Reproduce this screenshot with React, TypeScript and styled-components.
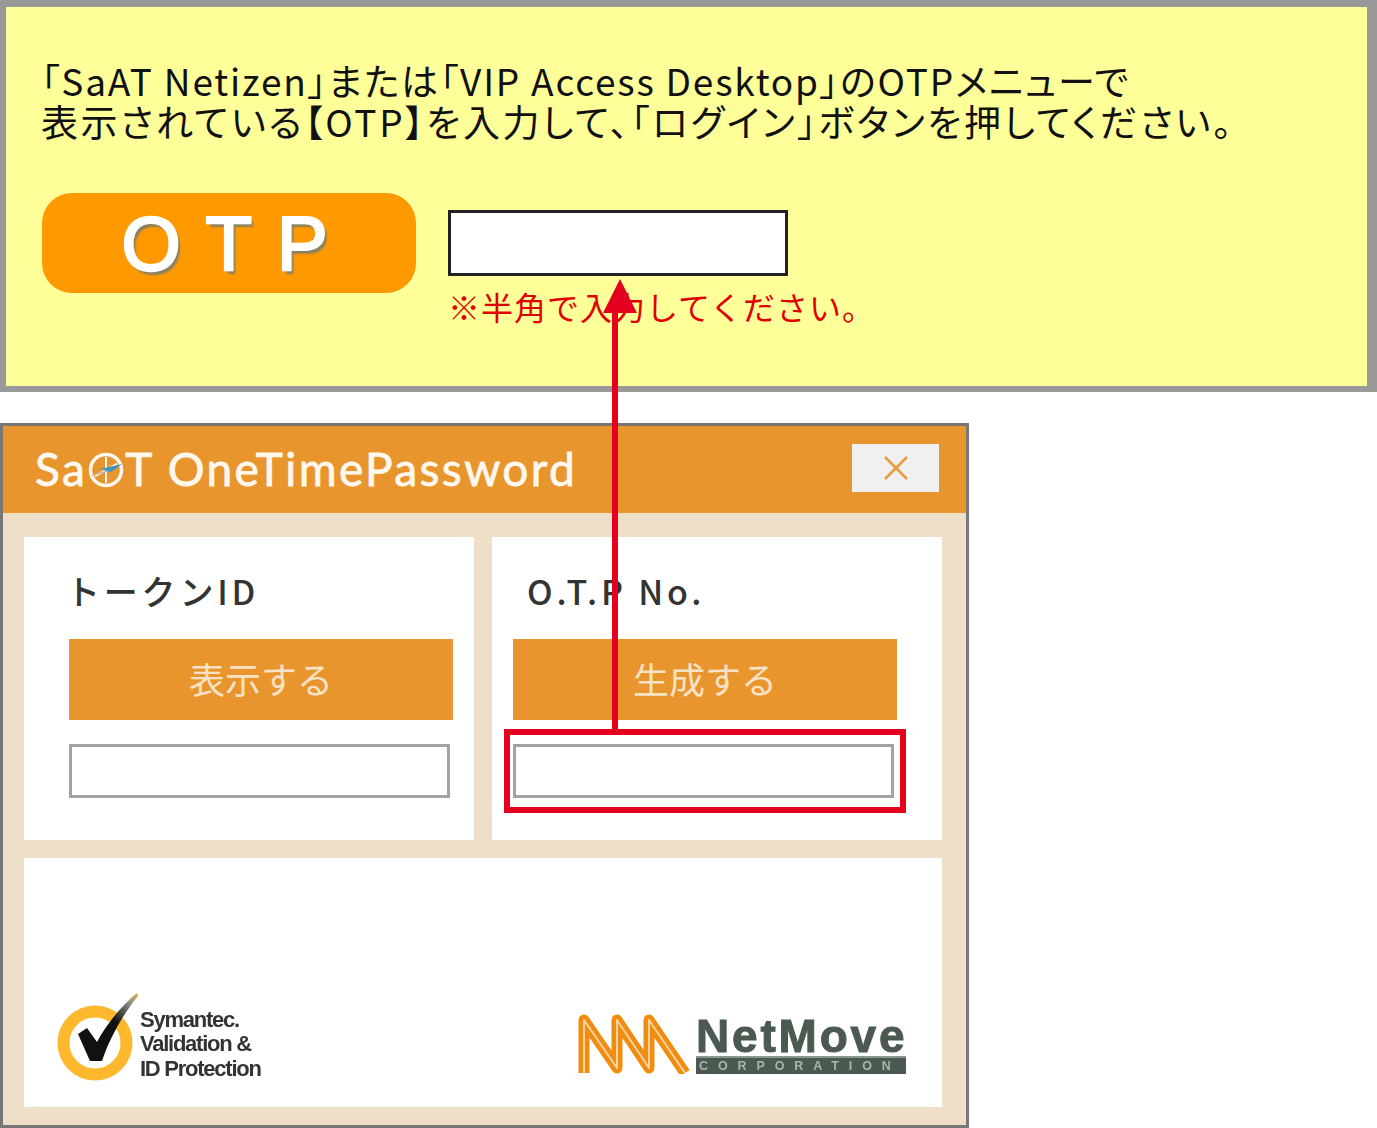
import React from 'react';
import styled, { createGlobalStyle } from 'styled-components';

const Global = createGlobalStyle`
  html, body { margin: 0; padding: 0; background: #fff; }
  body { font-family: "Liberation Sans", "Noto Sans CJK JP", sans-serif; }
`;

const Page = styled.div`
  position: relative;
  width: 1377px;
  height: 1128px;
  overflow: hidden;
  display: flex;
  flex-direction: column;
  gap: 31px;
`;

// upper panel
const Notice = styled.section`
  box-sizing: border-box;
  height: 392px;
  background: #ffff99;
  border: solid #999999;
  border-width: 7px 10px 6px 6px;
  padding: 53px 0 0 35px;
`;

const NoticeLine = styled.div<{ $tracking: number }>`
  font-family: "Noto Sans CJK JP", sans-serif;
  font-size: 37px;
  line-height: 41px;
  color: #111;
  white-space: nowrap;
  font-feature-settings: "palt";
  letter-spacing: ${p => p.$tracking}px;
`;

const NoticeRow = styled.div`
  display: flex;
  gap: 32px;
  margin-left: 1px;
  margin-top: 51px;
`;

const OtpBadge = styled.div`
  box-sizing: border-box;
  width: 374px;
  height: 100px;
  padding-left: 16px;
  border-radius: 30px;
  background: #ff9900;
  color: #fff;
  display: flex;
  align-items: center;
  justify-content: center;
  font-family: "Liberation Sans", sans-serif;
  font-size: 76px;
  font-weight: 400;
  letter-spacing: 25px;
  -webkit-text-stroke: 2.5px #fff;
  text-shadow: 3px 4px 2px #8a8060;
`;

const OtpColumn = styled.div`
  display: flex;
  flex-direction: column;
  padding-top: 17px;
`;

const OtpInput = styled.div`
  box-sizing: border-box;
  width: 340px;
  height: 66px;
  background: #fff;
  border: 3px solid #222;
`;

const HalfWidthNote = styled.div`
  margin-top: 10px;
  font-family: "Noto Sans CJK JP", sans-serif;
  font-size: 32px;
  line-height: 40px;
  letter-spacing: 1px;
  color: #e00000;
  white-space: nowrap;
`;

// lower window
const Window = styled.section`
  box-sizing: border-box;
  width: 969px;
  height: 705px;
  border: 3px solid #777777;
  background: #f0dfc8;
  display: flex;
  flex-direction: column;
`;

const TitleBar = styled.header`
  height: 87px;
  background: #e9952e;
  display: flex;
  align-items: center;
  justify-content: space-between;
  padding: 0 27px 0 32px;
  flex-shrink: 0;
`;

const TitleText = styled.div`
  display: flex;
  align-items: center;
  font-family: "Lato", sans-serif;
  font-size: 46px;
  font-weight: 400;
  letter-spacing: 2.4px;
  -webkit-text-stroke: 0.8px #fff8ee;
  color: #fff8ee;
  white-space: pre;
  margin-top: -2px;
`;

const CloseButton = styled.div`
  width: 87px;
  height: 48px;
  margin-top: -3px;
  background: #f0f0f0;
  display: flex;
  align-items: center;
  justify-content: center;
`;

const WindowBody = styled.div`
  flex: 1;
  display: grid;
  grid-template-columns: 450px 450px;
  grid-template-rows: 303px 249px;
  gap: 18px;
  padding: 24px 24px 18px 21px;
`;

const Card = styled.div<{ $inset: number }>`
  background: #fff;
  display: flex;
  flex-direction: column;
  padding-left: ${p => p.$inset}px;
`;

const CardTitle = styled.div<{ $shift: number }>`
  margin: 34px 0 0 ${p => p.$shift}px;
  height: 68px;
  font-family: "Noto Sans CJK JP", sans-serif;
  font-size: 34px;
  line-height: 40px;
  font-weight: 500;
  letter-spacing: 3.8px;
  color: #333;
  white-space: nowrap;
`;

const OrangeButton = styled.div`
  box-sizing: border-box;
  width: 384px;
  height: 81px;
  padding-bottom: 4px;
  background: #e9952e;
  color: #f8e2c6;
  display: flex;
  align-items: center;
  justify-content: center;
  font-family: "Noto Sans CJK JP", sans-serif;
  font-size: 36px;
`;

const FieldBox = styled.div`
  box-sizing: border-box;
  width: 381px;
  height: 54px;
  margin-top: 24px;
  background: #fff;
  border: 3px solid #a3a3a3;
`;

const FooterCard = styled.div`
  grid-column: 1 / 3;
  background: #fff;
  display: flex;
  align-items: flex-end;
  justify-content: space-between;
  padding: 0 36px 24px 32px;
`;

const SymantecLogo = styled.div`
  display: flex;
  align-items: flex-end;
`;

const SymantecText = styled.div`
  margin: 0 0 2px -14px;
  font-family: "Liberation Sans", sans-serif;
  font-size: 22px;
  line-height: 24.5px;
  font-weight: 700;
  letter-spacing: -1.25px;
  color: #333;
  white-space: nowrap;
  filter: blur(0.6px);
`;

const NetMoveLogo = styled.div`
  display: flex;
  align-items: flex-end;
  gap: 6px;
  margin-bottom: 9px;
`;

const NetMoveWords = styled.div`
  width: 210px;
  display: flex;
  flex-direction: column;
`;

const NetMoveName = styled.div`
  font-family: "Liberation Sans", sans-serif;
  font-size: 46px;
  line-height: 38px;
  height: 39px;
  font-weight: 700;
  letter-spacing: 2.8px;
  -webkit-text-stroke: 1px #4b5a50;
  color: #4b5a50;
  white-space: nowrap;
  filter: blur(0.6px);
`;

const CorporationBar = styled.div`
  height: 18px;
  background: #4b5a50;
  border-top: 2px solid #8d9790;
  box-sizing: border-box;
  padding-left: 3px;
  color: #aab3ad;
  font-family: "Liberation Sans", sans-serif;
  font-size: 12.5px;
  line-height: 16px;
  font-weight: 700;
  letter-spacing: 9.9px;
  white-space: nowrap;
  filter: blur(0.4px);
`;

// red annotation over both panels
const CalloutBox = styled.div`
  position: absolute;
  box-sizing: border-box;
  left: 504px;
  top: 729px;
  width: 402px;
  height: 84px;
  border: 6px solid #e60020;
`;

const CalloutLine = styled.div`
  position: absolute;
  left: 612px;
  top: 300px;
  width: 6px;
  height: 430px;
  background: #e60020;
`;

const CalloutHead = styled.div`
  position: absolute;
  left: 603px;
  top: 279px;
  width: 0;
  height: 0;
  border-left: 17px solid transparent;
  border-right: 17px solid transparent;
  border-bottom: 34px solid #e60020;
`;

const LogoMark = () => (
  <svg width="40" height="44" viewBox="0 0 40 44" style={{ margin: '0 -1px', display: 'block' }}>
    <circle cx="20" cy="23" r="15.5" fill="none" stroke="#fff8ee" strokeWidth="3.5" />
    <path d="M20 10v26M9 29l22-12" stroke="#fff8ee" strokeWidth="2" />
    <path d="M1 30 24 22l2 2z" fill="#b9b4ac" />
    <path d="M14 22l22-5-11 8z" fill="#3d93c4" />
  </svg>
);

const CloseIcon = () => (
  <svg width="26" height="26" viewBox="0 0 26 26">
    <path d="M2 2l22 22M24 2 2 24" stroke="#ea9b3e" strokeWidth="2.6" />
  </svg>
);

const CheckMark = () => (
  <svg width="98" height="90" viewBox="0 0 98 90" style={{ display: 'block' }}>
    <defs>
      <linearGradient id="tail" x1="0" y1="1" x2="1" y2="0">
        <stop offset="0.6" stopColor="#111" />
        <stop offset="0.85" stopColor="#8a8a84" />
        <stop offset="1" stopColor="#e0b040" />
      </linearGradient>
    </defs>
    <circle cx="39" cy="50" r="31.5" fill="none" stroke="#fdb82e" strokeWidth="12" />
    <path d="M22 41l9-6 10 14C50 32 66 12 81 0l1 3C68 20 54 44 46 68H34z" fill="url(#tail)" />
  </svg>
);

const WaveMark = () => (
  <svg width="114" height="60" viewBox="0 0 114 60" style={{ display: 'block' }}>
    <path
      d="M8 59V6L41 54V6L73 54V6L109 59"
      fill="none"
      stroke="#f08c10"
      strokeWidth="11"
      strokeLinejoin="round"
    />
    <path
      d="M8 59V6L41 54V6L73 54V6L109 59"
      fill="none"
      stroke="#fbd3a0"
      strokeWidth="2"
      strokeLinejoin="round"
    />
  </svg>
);

const App = () => {
  return (
    <Page>
      <Global />
      <Notice>
        <NoticeLine $tracking={1.8}>「SaAT Netizen」または「VIP Access Desktop」のOTPメニューで</NoticeLine>
        <NoticeLine $tracking={2.6}>表示されている【OTP】を入力して、「ログイン」ボタンを押してください。</NoticeLine>
        <NoticeRow>
          <OtpBadge>OTP</OtpBadge>
          <OtpColumn>
            <OtpInput />
            <HalfWidthNote>※半角で入力してください。</HalfWidthNote>
          </OtpColumn>
        </NoticeRow>
      </Notice>

      <Window>
        <TitleBar>
          <TitleText>
            Sa
            <LogoMark />
            T OneTimePassword
          </TitleText>
          <CloseButton>
            <CloseIcon />
          </CloseButton>
        </TitleBar>
        <WindowBody>
          <Card $inset={45}>
            <CardTitle $shift={-3}>トークンID</CardTitle>
            <OrangeButton>表示する</OrangeButton>
            <FieldBox />
          </Card>
          <Card $inset={21}>
            <CardTitle $shift={14}>O.T.P No.</CardTitle>
            <OrangeButton>生成する</OrangeButton>
            <FieldBox />
          </Card>
          <FooterCard>
            <SymantecLogo>
              <CheckMark />
              <SymantecText>
                Symantec.
                <br />
                Validation &amp;
                <br />
                ID Protection
              </SymantecText>
            </SymantecLogo>
            <NetMoveLogo>
              <WaveMark />
              <NetMoveWords>
                <NetMoveName>NetMove</NetMoveName>
                <CorporationBar>CORPORATION</CorporationBar>
              </NetMoveWords>
            </NetMoveLogo>
          </FooterCard>
        </WindowBody>
      </Window>

      <CalloutLine />
      <CalloutHead />
      <CalloutBox />
    </Page>
  );
};

export default App;
